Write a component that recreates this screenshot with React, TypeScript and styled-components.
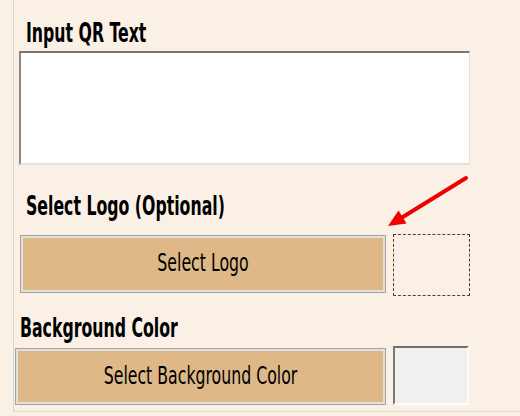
import React from "react";
import styled, { createGlobalStyle } from "styled-components";

const Global = createGlobalStyle`
  html, body { margin: 0; padding: 0; background: #faf0e6; }
  body { width: 520px; height: 416px; overflow: hidden; }
`;

const FONT = `"DejaVu Sans Condensed", "Liberation Sans", sans-serif`;

const Page = styled.div`
  position: relative;
  width: 520px;
  height: 416px;
  padding-left: 13px;
  box-sizing: border-box;
  background: #faf0e6;
`;

const Panel = styled.div`
  display: flex;
  flex-direction: column;
  border-left: 1px solid #cdd5dd;
  border-bottom: 1px solid #dedad4;
  padding: 23px 0 6px 0;
  font-family: ${FONT};
  color: #000;
`;

const Title = styled.div<{ $indent: number; $gap: number }>`
  margin-left: ${(p) => p.$indent}px;
  margin-top: ${(p) => p.$gap}px;
  height: 26px;
  line-height: 26px;
  font-size: 17.5px;
  font-weight: 700;
  white-space: nowrap;
`;

const Tall = styled.span<{ $stretch: number }>`
  display: inline-block;
  line-height: 20px;
  transform: scaleY(${(p) => p.$stretch});
  transform-origin: 50% 16px;
`;

const TextBox = styled.textarea`
  display: block;
  margin: 2px 0 0 5px;
  width: 451px;
  height: 114px;
  box-sizing: border-box;
  resize: none;
  background: #fff;
  border-top: 2px solid #777;
  border-left: 2px solid #888;
  border-right: 1px solid #e0e0e0;
  border-bottom: 2px solid #e3e3e3;
  outline: none;
  padding: 0;
`;

const Row = styled.div<{ $indent: number; $gap: number }>`
  display: flex;
  align-items: flex-start;
  gap: 7px;
  margin-left: ${(p) => p.$indent}px;
  margin-top: ${(p) => p.$gap}px;
`;

const TanButton = styled.button<{ $w: number; $h: number; $top: number }>`
  display: flex;
  align-items: center;
  justify-content: center;
  width: ${(p) => p.$w}px;
  height: ${(p) => p.$h}px;
  margin-top: ${(p) => p.$top}px;
  box-sizing: border-box;
  padding: 2px 0 0 0;
  background: #deb887;
  border: 1px solid #a3a3a3;
  box-shadow: inset 0 0 0 2px #e4e0da;
  font-family: ${FONT};
  font-size: 17.5px;
  color: #000;
  white-space: nowrap;
`;

const DashedBox = styled.div`
  width: 77px;
  height: 62px;
  box-sizing: border-box;
  border: 1px dashed #5e3c1c;
`;

const ColorBox = styled.div`
  width: 76px;
  height: 59px;
  box-sizing: border-box;
  background: #f0f0f0;
  border-top: 2px solid #707070;
  border-left: 2px solid #7a7a7a;
  border-right: 2px solid #fbfbfb;
  border-bottom: 2px solid #fdfdfd;
`;

const ArrowLayer = styled.svg`
  position: absolute;
  left: 0;
  top: 0;
  width: 520px;
  height: 416px;
  pointer-events: none;
`;

export default function App() {
  return (
    <Page>
      <Global />
      <Panel>
        <Title $indent={12} $gap={0}>
          <Tall $stretch={1.56}>Input QR Text</Tall>
        </Title>
        <TextBox />
        <Title $indent={12} $gap={31}>
          <Tall $stretch={1.56}>Select Logo (Optional)</Tall>
        </Title>
        <Row $indent={6} $gap={12}>
          <TanButton $w={366} $h={58} $top={1}>
            <Tall $stretch={1.45}>Select Logo</Tall>
          </TanButton>
          <DashedBox />
        </Row>
        <Title $indent={6} $gap={22}>
          <Tall $stretch={1.56}>Background Color</Tall>
        </Title>
        <Row $indent={1} $gap={2}>
          <TanButton $w={371} $h={57} $top={2}>
            <Tall $stretch={1.45}>Select Background Color</Tall>
          </TanButton>
          <ColorBox />
        </Row>
      </Panel>
      <ArrowLayer viewBox="0 0 520 416">
        <line x1="466" y1="178" x2="402" y2="217.5" stroke="#f00000" strokeWidth="4" strokeLinecap="round" />
        <polygon points="388,226 398.5,210.5 406.5,223.5" fill="#f00000" />
      </ArrowLayer>
    </Page>
  );
}
